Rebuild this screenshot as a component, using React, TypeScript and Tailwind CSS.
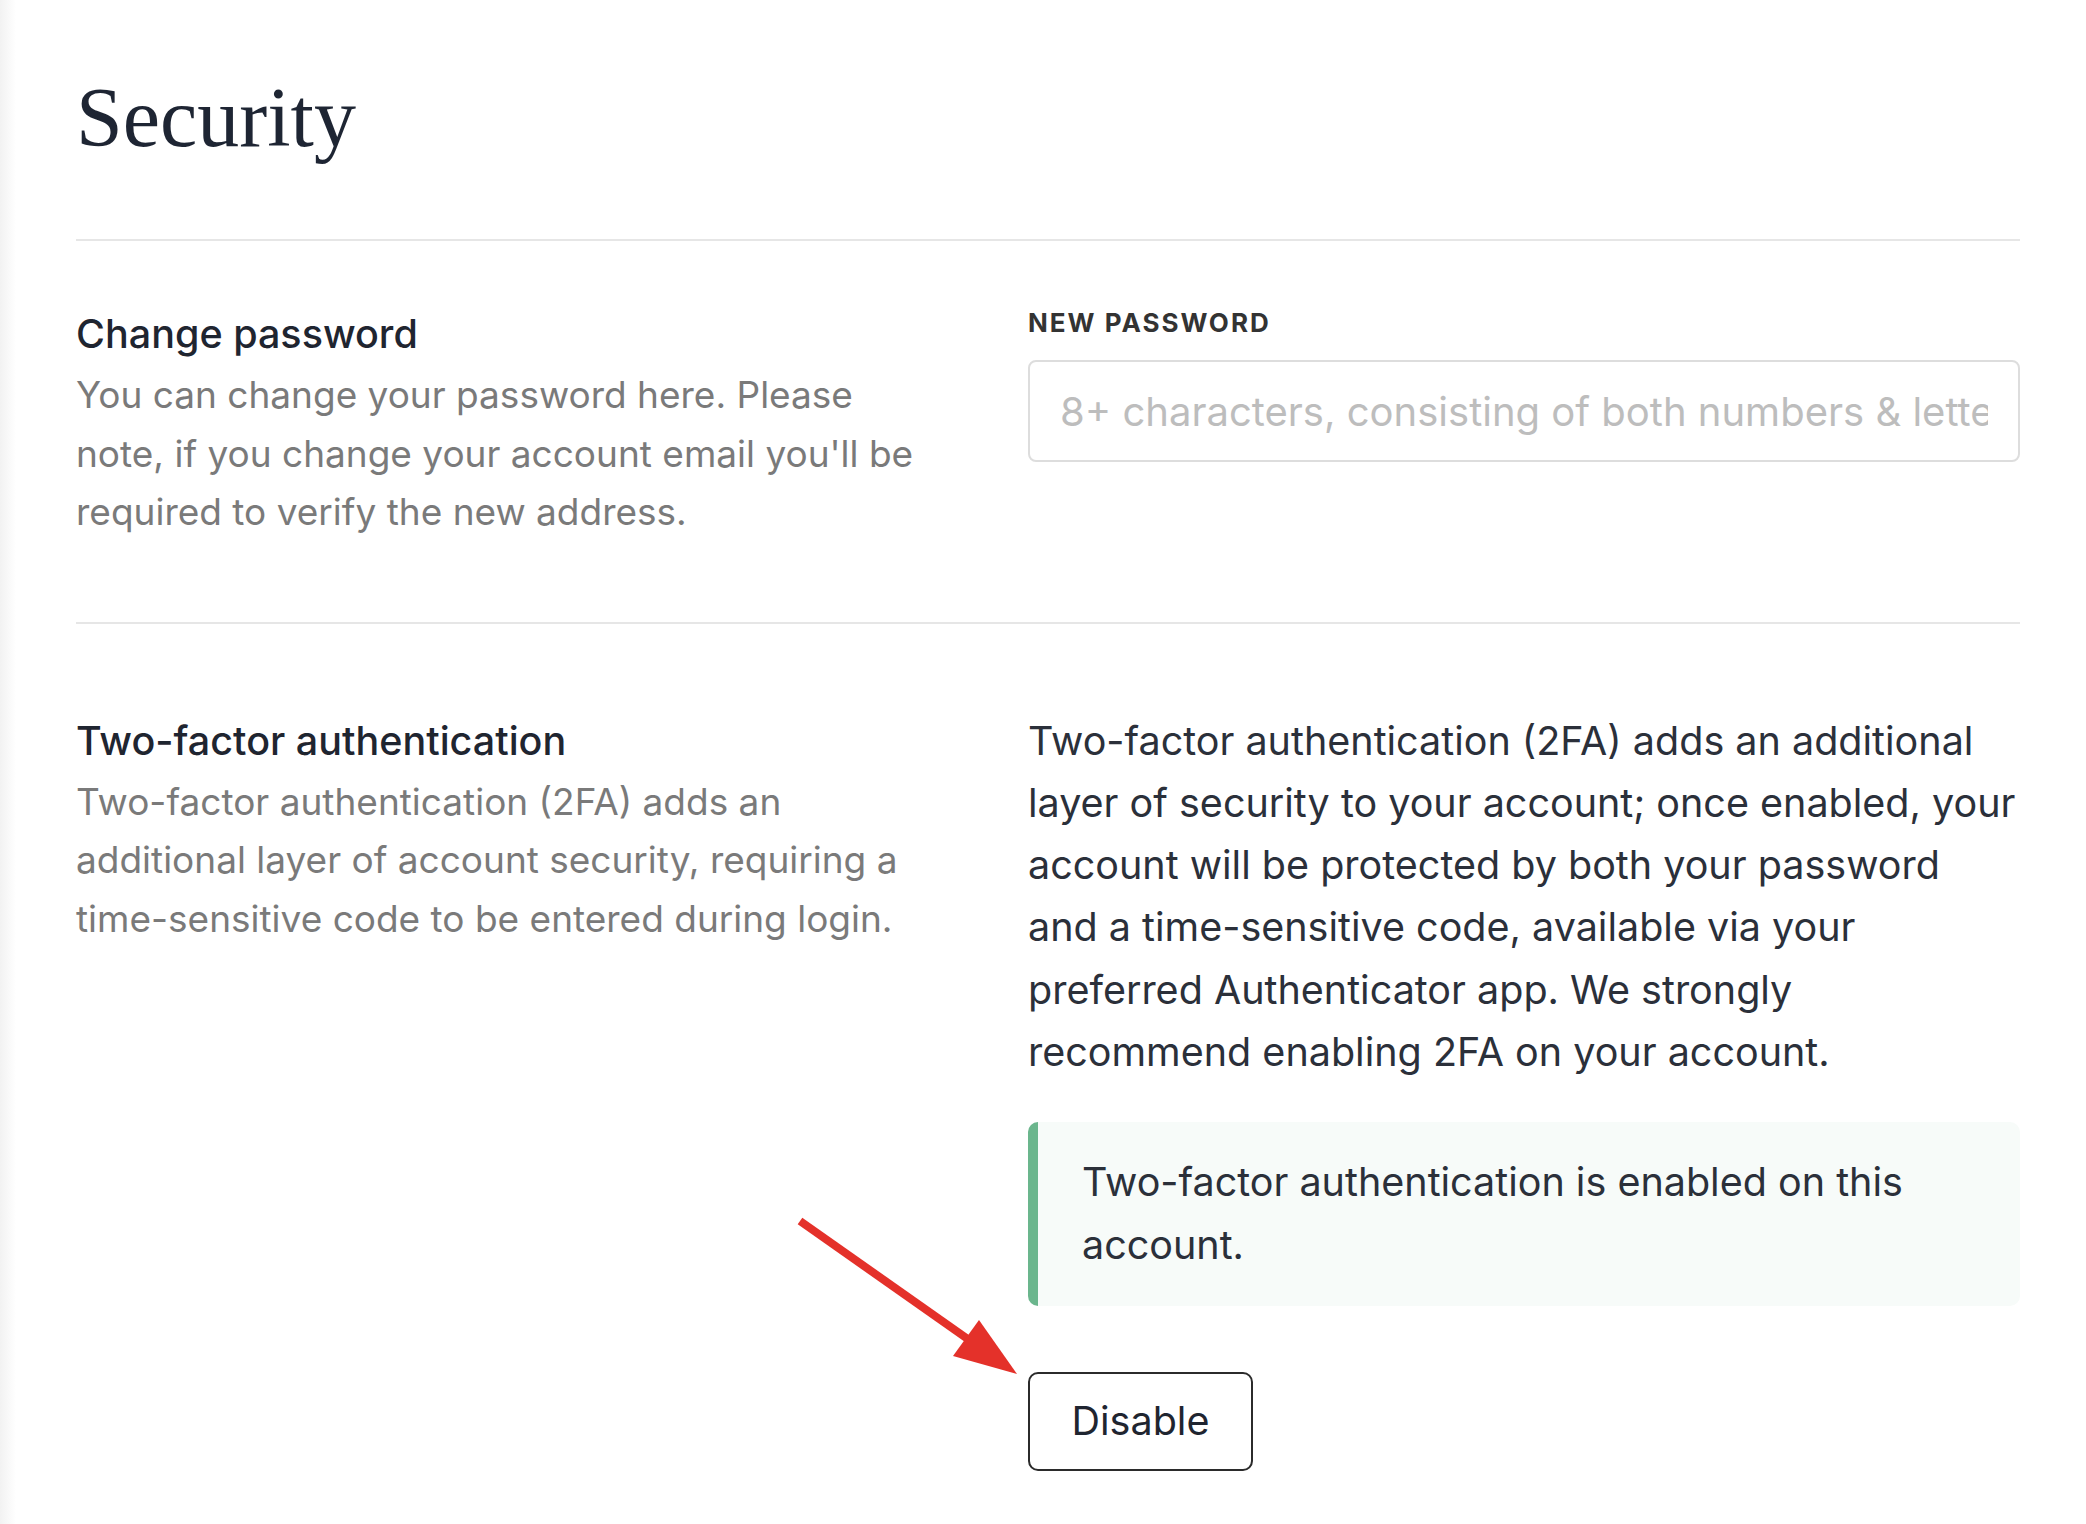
import React from "react";

export default function App() {
  return (
    <div className="relative flex min-h-[1524px] w-full bg-white font-['Inter',sans-serif]">
      <div className="w-[16px] shrink-0 bg-linear-to-r from-[#f2f2f2] to-white" />
      <div className="flex-1 pl-[60px] pr-[66px]">
        <h1 className="pt-[76px] text-[84px] leading-none font-normal text-[#1e2533] font-['Liberation_Serif',serif]">
          Security
        </h1>
        <div className="mt-[79px] h-[2px] bg-[#e6e6e6]" />

        {/* Change password */}
        <section className="flex items-start justify-between pb-[80px]">
          <div className="w-[855px] pt-[69px]">
            <h2 className="text-[39.5px] leading-[48px] font-medium text-[#1f2530]">Change password</h2>
            <p className="mt-[8px] text-[37px] leading-[58.5px] text-[#7a7a7a]">
              You can change your password here. Please note, if you change your account email you'll be required to verify the new address.
            </p>
          </div>
          <div className="w-[992px] pt-[66px]">
            <label className="block text-[26px] leading-[32px] font-bold tracking-[2px] text-[#333]">NEW PASSWORD</label>
            <input
              type="password"
              placeholder="8+ characters, consisting of both numbers & letters"
              className="mt-[21px] block h-[102px] w-full rounded-[8px] border-2 border-[#dddddd] bg-white px-[30px] text-[40px] text-[#333] outline-none placeholder:text-[#bdbdbd]"
            />
          </div>
        </section>
        <div className="h-[2px] bg-[#e6e6e6]" />

        {/* Two-factor */}
        <section className="flex items-start justify-between pb-[52px]">
          <div className="w-[855px] pt-[93px]">
            <h2 className="text-[39.5px] leading-[48px] font-medium text-[#1f2530]">Two-factor authentication</h2>
            <p className="mt-[8px] text-[37px] leading-[58.5px] text-[#7a7a7a]">
              Two-factor authentication (2FA) adds an additional layer of account security, requiring a time-sensitive code to be entered during login.
            </p>
          </div>
          <div className="w-[992px] pt-[86px]">
            <p className="text-[39.5px] leading-[62.3px] text-[#2b303a]">
              Two-factor authentication (2FA) adds an additional layer of security to your account; once enabled, your account will be protected by both your password and{"\u00A0"}a time-sensitive code, available via your preferred Authenticator app. We strongly recommend enabling 2FA on your account.
            </p>
            <div className="mt-[39px] rounded-[10px] border-l-[10px] border-[#6bb68d] bg-[#f7fbf9] py-[29px] pl-[44px] pr-[44px]">
              <p className="text-[39.5px] leading-[63px] text-[#2b303a]">
                Two-factor authentication is enabled on this account.
              </p>
            </div>
            <button className="mt-[66px] flex h-[99px] w-[225px] items-center justify-center rounded-[10px] border-2 border-[#2b2b2b] bg-white text-[39.5px] text-[#1f2530]">
              Disable
            </button>
          </div>
        </section>
      </div>

      {/* Annotation arrow */}
      <svg
        className="pointer-events-none absolute left-0 top-0"
        width="2086"
        height="1524"
        viewBox="0 0 2086 1524"
      >
        <line x1="800" y1="1221" x2="972" y2="1342" stroke="#e4312a" strokeWidth="8" strokeLinecap="butt" />
        <polygon points="1017,1374 979,1320 953,1356" fill="#e4312a" />
      </svg>
    </div>
  );
}
